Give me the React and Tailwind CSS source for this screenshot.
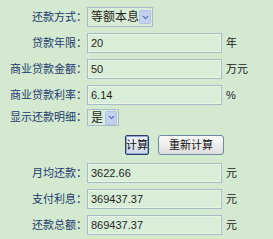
import { ChevronDown } from 'lucide-react';

const font = { fontFamily: '"Liberation Sans", "Noto Sans CJK SC", sans-serif' };

function Label({ children }) {
  return (
    <div className="w-[87px] shrink-0 text-right text-[11px] leading-none text-[#24386e] whitespace-nowrap">
      {children}
    </div>
  );
}

function Field({ label, value, unit }) {
  return (
    <div className="flex items-center h-[20px]">
      <Label>{label}</Label>
      <div className="w-[135px] h-[20px] border border-[#a6bccb] bg-[#d9eed7] shadow-[inset_0_0_0_1px_#e8f4e6] flex items-center px-[3px] text-[11px] text-[#1e1e1e]">
        {value}
      </div>
      {unit && <span className="ml-[4px] text-[11px] text-[#222]">{unit}</span>}
    </div>
  );
}

function Select({ value, width }) {
  return (
    <div className={`flex items-center justify-between border border-[#a6bccb] bg-[#d9eed7] pl-[3px] pr-[1px] ${width}`}>
      <span className="text-[12px] leading-none text-[#1e1e1e]">{value}</span>
      <span className="flex items-center justify-center w-[12px] h-[14px] bg-[#c3d0ee] border border-[#b3c2e6] rounded-[1px]">
        <ChevronDown className="w-[9px] h-[9px] text-[#4d6bc4]" strokeWidth={3} />
      </span>
    </div>
  );
}

export default function App() {
  return (
    <div className="w-[273px] h-[239px] bg-[#d3ead1] pt-[7px] overflow-hidden" style={font}>
      <div className="flex items-center h-[20px]">
        <Label>还款方式：</Label>
        <Select value="等额本息" width="w-[66px] h-[20px]" />
      </div>
      <div className="mt-[6px]"><Field label="贷款年限：" value="20" unit="年" /></div>
      <div className="mt-[6px]"><Field label="商业贷款金额：" value="50" unit="万元" /></div>
      <div className="mt-[6px]"><Field label="商业贷款利率：" value="6.14" unit="%" /></div>
      <div className="mt-[4px] flex items-center h-[17px]">
        <Label>显示还款明细：</Label>
        <Select value="是" width="w-[32px] h-[17px]" />
      </div>
      <div className="mt-[9px] flex items-center h-[20px] pl-[125px] gap-[9px]">
        <button className="h-[20px] w-[24px] border border-[#2c3e63] rounded-[2px] bg-gradient-to-b from-[#f2f4fa] to-[#cdd6ea] shadow-[inset_0_0_0_1px_#8ea6d6] text-[11px] leading-none text-[#111] flex items-center justify-center">
          计算
        </button>
        <button className="h-[20px] w-[66px] border border-[#7088a8] rounded-[3px] bg-gradient-to-b from-[#fcfcfc] to-[#dedede] text-[11px] leading-none text-[#111] flex items-center justify-center">
          重新计算
        </button>
      </div>
      <div className="mt-[8px]"><Field label="月均还款：" value="3622.66" unit="元" /></div>
      <div className="mt-[6px]"><Field label="支付利息：" value="369437.37" unit="元" /></div>
      <div className="mt-[6px]"><Field label="还款总额：" value="869437.37" unit="元" /></div>
    </div>
  );
}
